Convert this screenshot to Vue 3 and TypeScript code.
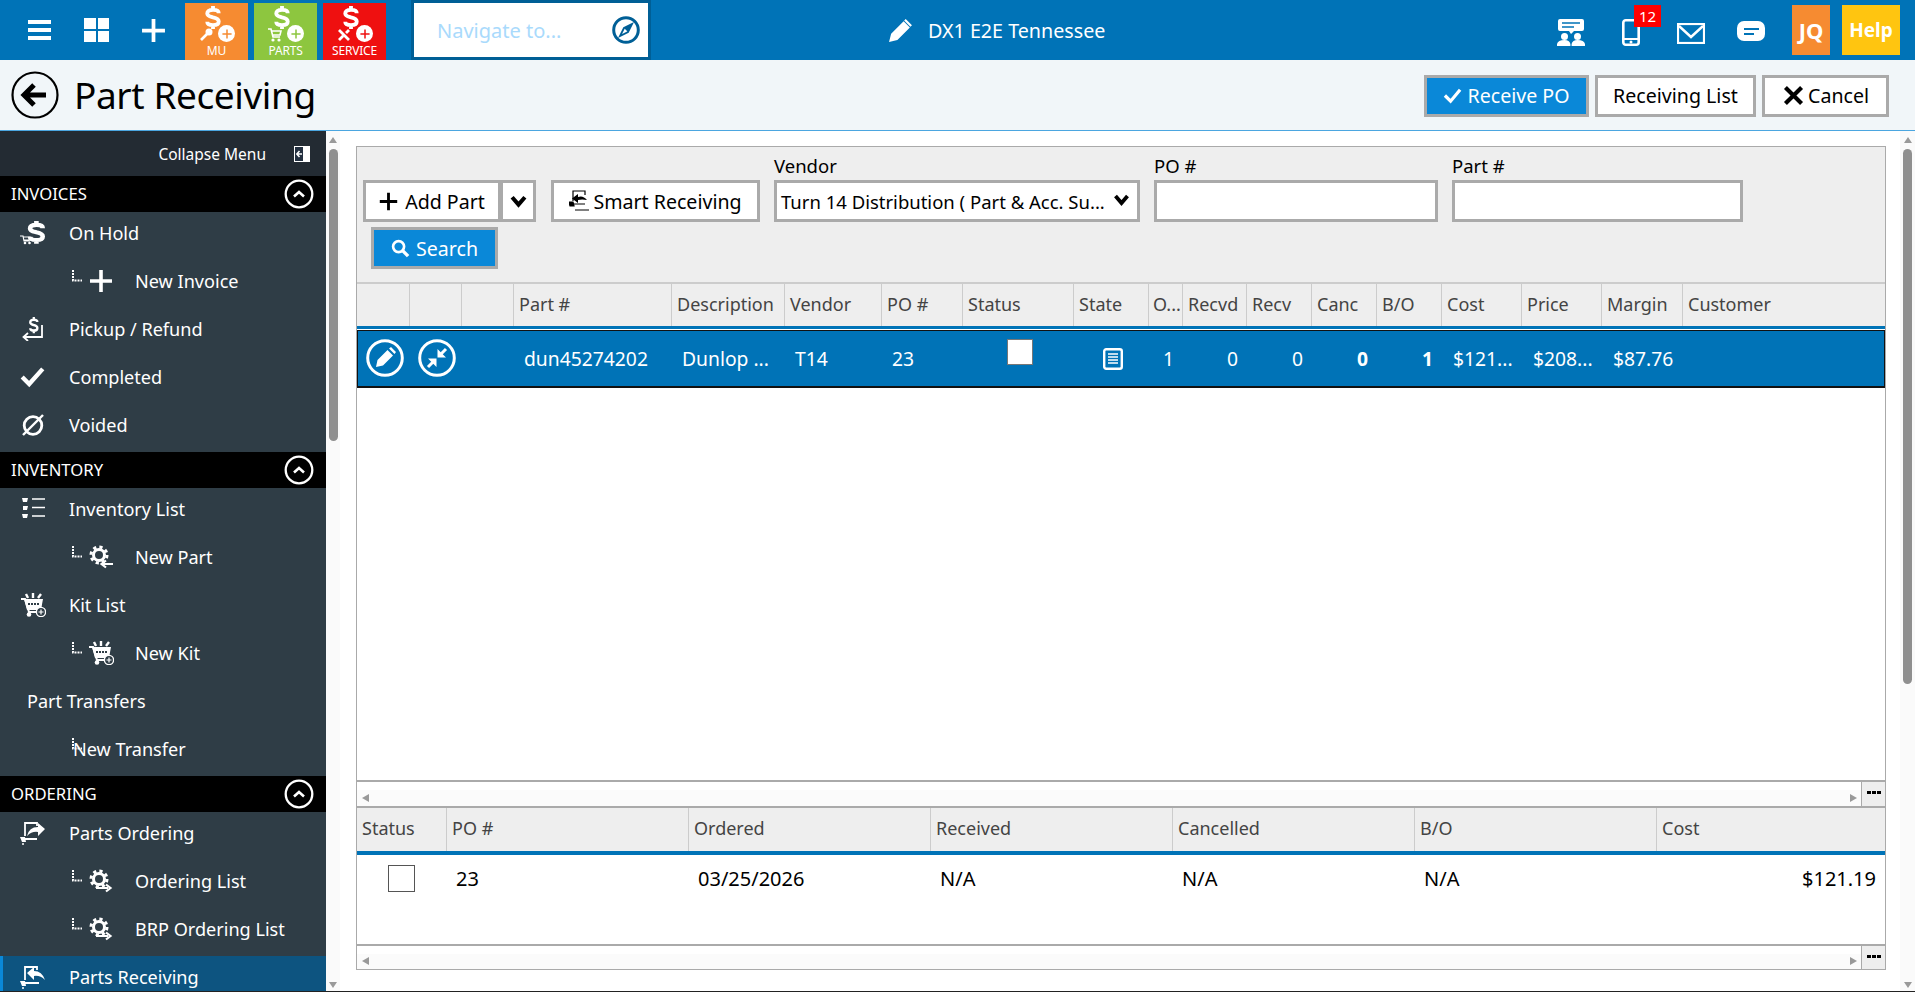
<script setup lang="ts">
interface MenuItem { label: string; icon?: string; level: 0 | 1; active?: boolean; plain?: boolean; overlap?: boolean }
interface Section { title: string; items: MenuItem[] }

const sections: Section[] = [
  { title: 'INVOICES', items: [
    { label: 'On Hold', icon: 'hold', level: 0 },
    { label: 'New Invoice', icon: 'plus', level: 1 },
    { label: 'Pickup / Refund', icon: 'pickup', level: 0 },
    { label: 'Completed', icon: 'check', level: 0 },
    { label: 'Voided', icon: 'void', level: 0 },
  ] },
  { title: 'INVENTORY', items: [
    { label: 'Inventory List', icon: 'list', level: 0 },
    { label: 'New Part', icon: 'gearback', level: 1 },
    { label: 'Kit List', icon: 'kit', level: 0 },
    { label: 'New Kit', icon: 'kit', level: 1 },
    { label: 'Part Transfers', level: 0, plain: true },
    { label: 'New Transfer', level: 1, overlap: true },
  ] },
  { title: 'ORDERING', items: [
    { label: 'Parts Ordering', icon: 'order', level: 0 },
    { label: 'Ordering List', icon: 'gearfwd', level: 1 },
    { label: 'BRP Ordering List', icon: 'gearfwd', level: 1 },
    { label: 'Parts Receiving', icon: 'recv', level: 0, active: true },
  ] },
]

const tiles = [
  { label: 'MU', cls: 'mu', icon: 'key' },
  { label: 'PARTS', cls: 'parts', icon: 'cart' },
  { label: 'SERVICE', cls: 'service', icon: 'wrench' },
]

const topHeads = ['', '', '', 'Part #', 'Description', 'Vendor', 'PO #', 'Status', 'State', 'O...', 'Recvd', 'Recv', 'Canc', 'B/O', 'Cost', 'Price', 'Margin', 'Customer']
const subHeads = ['Status', 'PO #', 'Ordered', 'Received', 'Cancelled', 'B/O', 'Cost']
</script>

<template>
  <div class="app">
    <svg class="defs" aria-hidden="true">
      <symbol id="i-dollar" viewBox="0 0 16 24"><path d="M14 7.500C14 5 11 4 8 4 4.500 4 2 5 2 7.800 2 10.500 5 11 8 11.800 11.500 12.600 14 13.500 14 16.200 14 19 11.500 20 8 20 4.500 20 2 19 2 16.500M8 0V4M8 20V24" fill="none" stroke="currentColor" stroke-width="4"/></symbol>
      <symbol id="i-plus" viewBox="0 0 24 24"><path d="M12 1V23M1 12H23" fill="none" stroke="currentColor" stroke-width="3.600"/></symbol>
      <symbol id="i-key" viewBox="0 0 14 14"><circle cx="10" cy="4" r="3.500" fill="currentColor"/><path d="M8 6 2 12" stroke="currentColor" stroke-width="2.600" fill="none"/></symbol>
      <symbol id="i-cart" viewBox="0 0 14 14"><path d="M0 1H3L5 9H12M3.500 3H13L12 7H4.500" fill="none" stroke="currentColor" stroke-width="1.600"/><circle cx="5" cy="12" r="1.600" fill="currentColor"/><circle cx="11" cy="12" r="1.600" fill="currentColor"/></symbol>
      <symbol id="i-wrench" viewBox="0 0 14 14"><path d="M2 2 12 12M2 12 6 8M9 5 12 2" fill="none" stroke="currentColor" stroke-width="2.800"/></symbol>
      <symbol id="i-compass" viewBox="0 0 28 28"><circle cx="14" cy="14" r="12.300" fill="none" stroke="currentColor" stroke-width="3"/><path d="M20 8 16 16 8 20 12 12Z" fill="none" stroke="currentColor" stroke-width="1.800"/><path d="M20 8 12 12 16 16Z" fill="currentColor"/></symbol>
      <symbol id="i-pencil" viewBox="0 0 24 24"><path d="M1 23 3 15 15 3 21 9 9 21ZM17 1 23 7 21.500 8.500 15.500 2.500Z" fill="currentColor"/></symbol>
      <symbol id="i-people" viewBox="0 0 28 27"><path d="M1 2Q1 0 3 0H25Q27 0 27 2V10Q27 12 25 12H17L14 15 12 12H3Q1 12 1 10Z" fill="currentColor"/><path d="M5 4H23M5 8H17" stroke="#0073b7" stroke-width="1.600"/><circle cx="7.500" cy="17.500" r="3.500" fill="currentColor"/><circle cx="20.500" cy="17.500" r="3.500" fill="currentColor"/><path d="M0 27V25Q1 21 7.500 21 12.500 21 13.400 25V27ZM14.600 27V25Q15.500 21 20.500 21 27 21 28 25V27Z" fill="currentColor"/></symbol>
      <symbol id="i-phone" viewBox="0 0 18 27"><rect x="1.300" y="1.300" width="15.400" height="24.400" rx="2.500" fill="none" stroke="currentColor" stroke-width="2.600"/><path d="M1 20H17" stroke="currentColor" stroke-width="2"/><circle cx="9" cy="23" r="1.500" fill="currentColor"/></symbol>
      <symbol id="i-mail" viewBox="0 0 28 21"><rect x="1" y="1" width="26" height="19" fill="none" stroke="currentColor" stroke-width="2.200"/><path d="M2 3 14 14 26 3" fill="none" stroke="currentColor" stroke-width="2.400"/></symbol>
      <symbol id="i-chat" viewBox="0 0 28 21"><rect x="0" y="0" width="28" height="20" rx="7" fill="currentColor"/><path d="M7 8H22M7 13H17" stroke="#0073b7" stroke-width="2.200"/></symbol>
      <symbol id="i-back" viewBox="0 0 48 48"><circle cx="24" cy="24" r="22.500" fill="none" stroke="currentColor" stroke-width="2.200"/><path d="M35 24H14M23 14 13 24 23 34" fill="none" stroke="currentColor" stroke-width="5"/></symbol>
      <symbol id="i-ok" viewBox="0 0 20 20"><path d="M2 10 8 16 18 4" fill="none" stroke="currentColor" stroke-width="3.400"/></symbol>
      <symbol id="i-x" viewBox="0 0 20 20"><path d="M3 3 17 17M17 3 3 17" fill="none" stroke="currentColor" stroke-width="3.600"/></symbol>
      <symbol id="i-chev" viewBox="0 0 16 12"><path d="M2 2 8 9 14 2" fill="none" stroke="currentColor" stroke-width="3.800"/></symbol>
      <symbol id="i-search" viewBox="0 0 20 20"><circle cx="8" cy="8" r="5.800" fill="none" stroke="currentColor" stroke-width="2.800"/><path d="M12 12 18 18" stroke="currentColor" stroke-width="3.600"/></symbol>
      <symbol id="i-smart" viewBox="0 0 20 24"><path d="M4 12V2H16V6M5 15H16" fill="none" stroke="currentColor" stroke-width="1.200"/><path d="M18 11Q14 6 9 8V5L3 9.500 9 14V11Q13 10 18 11Z" fill="currentColor"/><path d="M0 13H4L5 17H1ZM6 21H20" stroke="currentColor" stroke-width="1.200"/></symbol>
      <symbol id="i-collapse" viewBox="0 0 16 16"><rect x="0.500" y="0.500" width="15" height="15" fill="#233040" stroke="currentColor"/><rect x="9" y="1" width="6" height="14" fill="currentColor"/><path d="M8 8H3M5.500 5 2.800 8 5.500 11" fill="none" stroke="currentColor" stroke-width="1.500"/></symbol>
      <symbol id="i-up" viewBox="0 0 30 30"><circle cx="15" cy="15" r="13.300" fill="none" stroke="currentColor" stroke-width="2.300"/><path d="M10 17.500 15 13 20 17.500" fill="none" stroke="currentColor" stroke-width="2.600"/></symbol>
      <symbol id="i-hold" viewBox="0 0 26 24"><g transform="translate(8 0) scale(1.05 .95)"><path d="M14 7.500C14 5 11 4 8 4 4.500 4 2 5 2 7.800 2 10.500 5 11 8 11.800 11.500 12.600 14 13.500 14 16.200 14 19 11.500 20 8 20 4.500 20 2 19 2 16.500M8 0V4M8 20V24" fill="none" stroke="currentColor" stroke-width="4.400"/></g><path d="M0 15H3L4 20H10M3.500 16H10L9 19H4" fill="none" stroke="currentColor" stroke-width="1.200"/><circle cx="5" cy="22" r="1.300" fill="currentColor"/><circle cx="9.500" cy="22" r="1.300" fill="currentColor"/></symbol>
      <symbol id="i-pickup" viewBox="0 0 24 24"><g transform="translate(8 0) scale(.6 .68)"><path d="M14 7.500C14 5 11 4 8 4 4.500 4 2 5 2 7.800 2 10.500 5 11 8 11.800 11.500 12.600 14 13.500 14 16.200 14 19 11.500 20 8 20 4.500 20 2 19 2 16.500M8 0V4M8 20V24" fill="none" stroke="currentColor" stroke-width="3.800"/></g><path d="M21 8V20H3M7 16 2.500 20 7 24" fill="none" stroke="currentColor" stroke-width="1.800"/></symbol>
      <symbol id="i-check" viewBox="0 0 24 20"><path d="M2 10 8.500 16.500 21 2.500" fill="none" stroke="currentColor" stroke-width="4"/></symbol>
      <symbol id="i-void" viewBox="0 0 24 24"><circle cx="12" cy="12.500" r="8.800" fill="none" stroke="currentColor" stroke-width="2.800"/><path d="M2 22 22 2" stroke="currentColor" stroke-width="2.400"/></symbol>
      <symbol id="i-list" viewBox="0 0 26 24"><path d="M12 2H25M12 10.500H25M12 19H25" stroke="currentColor" stroke-width="1.700"/><path d="M2 1H8L7 5H3ZM3 9H8L7 13H3ZM2 17H8L7 21H3Z" fill="currentColor"/></symbol>
      <symbol id="i-gearback" viewBox="0 0 26 24"><circle cx="11" cy="10" r="5.500" fill="none" stroke="currentColor" stroke-width="3"/><circle cx="11" cy="10" r="8" fill="none" stroke="currentColor" stroke-width="3" stroke-dasharray="3.200 3.100"/><path d="M25 19H14M18 15.500 13.500 19 18 22.500" fill="none" stroke="currentColor" stroke-width="2.200"/></symbol>
      <symbol id="i-gearfwd" viewBox="0 0 26 24"><circle cx="11" cy="10" r="5.500" fill="none" stroke="currentColor" stroke-width="3"/><circle cx="11" cy="10" r="8" fill="none" stroke="currentColor" stroke-width="3" stroke-dasharray="3.200 3.100"/><path d="M8 19H20M18 15.500 22.500 19 18 22.500" fill="none" stroke="currentColor" stroke-width="2.200"/></symbol>
      <symbol id="i-kit" viewBox="0 0 26 24"><path d="M1 6H5L9 19H20" fill="none" stroke="currentColor" stroke-width="2"/><path d="M4 6H23L21 17H7Z" fill="currentColor"/><path d="M8 5 6 1M13 5V0M18 5 21 1" stroke="currentColor" stroke-width="2.400"/><path d="M8 11H19" stroke="#2f3d46" stroke-width="2" stroke-dasharray="2 1"/><circle cx="9" cy="21.500" r="2.300" fill="currentColor"/><circle cx="21" cy="19" r="4.600" fill="#2f3d46" stroke="currentColor" stroke-width="1.400"/><path d="M18.500 19H23.500M21 16.500V21.500" stroke="currentColor" stroke-width="1.200"/></symbol>
      <symbol id="i-order" viewBox="0 0 26 24"><path d="M5 15V2H17V5M5 18H17" fill="none" stroke="currentColor" stroke-width="1.800"/><path d="M25 8 18 2V6Q9 6 7 15 12 10 18 11V15Z" fill="currentColor"/><path d="M0 16H5L6 21H2Z" fill="currentColor"/><circle cx="3" cy="23" r="1" fill="currentColor"/></symbol>
      <symbol id="i-recv" viewBox="0 0 26 24"><path d="M5 15V2H17V5M5 18H19" fill="none" stroke="currentColor" stroke-width="1.800"/><path d="M7 8 14 2V6Q22 6 25 15 20 10 14 11V15Z" fill="currentColor"/><path d="M0 16H5L6 21H2Z" fill="currentColor"/><circle cx="3" cy="23" r="1" fill="currentColor"/></symbol>
      <symbol id="i-expand" viewBox="0 0 38 38"><circle cx="19" cy="19" r="17.300" fill="none" stroke="currentColor" stroke-width="3"/><path d="M28 10 21.500 16.500M10 28 16.500 21.500" fill="none" stroke="currentColor" stroke-width="3"/><path d="M19.500 10 28 18.500H19.500ZM18.500 28 10 19.500H18.500Z" fill="currentColor"/></symbol>
      <symbol id="i-edit" viewBox="0 0 38 38"><circle cx="19" cy="19" r="17.300" fill="none" stroke="currentColor" stroke-width="3"/><path d="M10 28 11.500 21 21.500 11 27 16.500 17 26.500ZM23 9.500 25 8 30 13 28.500 15Z" fill="currentColor"/></symbol>
      <symbol id="i-doc" viewBox="0 0 20 22"><rect x="1.200" y="1.200" width="17.600" height="19.600" rx="2" fill="none" stroke="currentColor" stroke-width="2.400"/><path d="M5 6H15M5 9H15M5 12H15M5 15H15" stroke="currentColor" stroke-width="1.700"/></symbol>
    </svg>

    <header class="topbar">
      <button class="tool hamburger" aria-label="Menu">
        <span></span><span></span><span></span>
      </button>
      <div class="quad"><span></span><span></span><span></span><span></span></div>
      <svg class="topplus"><use href="#i-plus" /></svg>
      <div class="tiles">
        <div v-for="t in tiles" :key="t.label" class="tile" :class="t.cls">
          <svg class="tile-dollar"><use href="#i-dollar" /></svg>
          <svg class="tile-small"><use :href="'#i-' + t.icon" /></svg>
          <span class="tile-circle"><svg><use href="#i-plus" /></svg></span>
          <span class="tile-label">{{ t.label }}</span>
        </div>
      </div>
      <div class="navbox">
        <span class="nav-text">Navigate to...</span>
        <svg class="compass"><use href="#i-compass" /></svg>
      </div>
      <div class="store">
        <svg class="store-pencil"><use href="#i-pencil" /></svg>
        <span>DX1 E2E Tennessee</span>
      </div>
      <div class="top-right">
        <svg class="tr-people"><use href="#i-people" /></svg>
        <div class="tr-phone">
          <svg><use href="#i-phone" /></svg>
          <span class="badge">12</span>
        </div>
        <svg class="tr-mail"><use href="#i-mail" /></svg>
        <svg class="tr-chat"><use href="#i-chat" /></svg>
        <div class="user">JQ</div>
        <div class="help">Help</div>
      </div>
    </header>

    <div class="pagehead">
      <svg class="back"><use href="#i-back" /></svg>
      <h1>Part Receiving</h1>
      <div class="actions">
        <button class="btn primary lg recv"><svg class="bi"><use href="#i-ok" /></svg>Receive PO</button>
        <button class="btn lg list">Receiving List</button>
        <button class="btn lg cancel"><svg class="bi"><use href="#i-x" /></svg>Cancel</button>
      </div>
    </div>

    <div class="body">
      <aside class="sidebar">
        <div class="collapse">
          <span>Collapse Menu</span>
          <svg><use href="#i-collapse" /></svg>
        </div>
        <section v-for="s in sections" :key="s.title">
          <div class="sec-head">
            <span>{{ s.title }}</span>
            <svg><use href="#i-up" /></svg>
          </div>
          <div
            v-for="m in s.items"
            :key="m.label"
            class="item"
            :class="{ sub: m.level === 1, active: m.active, plain: m.plain, overlap: m.overlap }"
          >
            <svg v-if="m.level === 1" class="elbow" viewBox="0 0 10 12"><path d="M1 0V10.500H10" fill="none" stroke="#fff" stroke-width="2" stroke-dasharray="2 1" /></svg>
            <svg v-if="m.icon" class="mi" :class="'mi-' + m.icon"><use :href="'#i-' + m.icon" /></svg>
            <span class="mlabel">{{ m.label }}</span>
          </div>
        </section>
      </aside>
      <div class="vscroll side">
        <i class="arr up"></i><b class="thumb"></b><i class="arr down"></i>
      </div>

      <main class="content">
        <div class="panel">
          <div class="filter">
            <div class="filter-row">
              <div class="split">
                <button class="btn add"><svg class="bi plus"><use href="#i-plus" /></svg>Add Part</button>
                <button class="btn caret" aria-label="More"><svg><use href="#i-chev" /></svg></button>
              </div>
              <button class="btn smart"><svg class="smart-ic"><use href="#i-smart" /></svg>Smart Receiving</button>
              <label class="field vendor">
                <span>Vendor</span>
                <div class="select">Turn 14 Distribution ( Part &amp; Acc. Su...<svg><use href="#i-chev" /></svg></div>
              </label>
              <label class="field po"><span>PO #</span><input type="text" /></label>
              <label class="field part"><span>Part #</span><input type="text" /></label>
            </div>
            <button class="btn primary search"><svg class="bi"><use href="#i-search" /></svg>Search</button>
          </div>

          <div class="grid-head top-cols">
            <div v-for="(h, i) in topHeads" :key="i" class="th">{{ h }}</div>
          </div>
          <div class="grid-body">
            <div class="selrow top-cols">
              <div class="c ic"><svg class="round"><use href="#i-edit" /></svg></div>
              <div class="c ic"><svg class="round"><use href="#i-expand" /></svg></div>
              <div class="c"></div>
              <div class="c partno">dun45274202</div>
              <div class="c desc">Dunlop ...</div>
              <div class="c vend">T14</div>
              <div class="c pono">23</div>
              <div class="c ic"><span class="whitebox"></span></div>
              <div class="c ic"><svg class="doc"><use href="#i-doc" /></svg></div>
              <div class="c num">1</div>
              <div class="c num">0</div>
              <div class="c num">0</div>
              <div class="c num strong">0</div>
              <div class="c num strong">1</div>
              <div class="c money">$121...</div>
              <div class="c money">$208...</div>
              <div class="c money">$87.76</div>
              <div class="c"></div>
            </div>
          </div>
          <div class="hbar">
            <div class="track"><i class="tri left"></i><i class="tri right"></i></div>
            <div class="more"><span></span><span></span><span></span></div>
          </div>

          <div class="grid-head sub-head sub-cols">
            <div v-for="h in subHeads" :key="h" class="th">{{ h }}</div>
          </div>
          <div class="sub-row sub-cols">
            <div class="s ic"><span class="greybox"></span></div>
            <div class="s">23</div>
            <div class="s">03/25/2026</div>
            <div class="s">N/A</div>
            <div class="s">N/A</div>
            <div class="s">N/A</div>
            <div class="s right">$121.19</div>
          </div>
          <div class="hbar last">
            <div class="track"><i class="tri left"></i><i class="tri right"></i></div>
            <div class="more"><span></span><span></span><span></span></div>
          </div>
        </div>
      </main>
      <div class="vscroll page">
        <i class="arr up"></i><b class="thumb"></b><i class="arr down"></i>
      </div>
    </div>
    <div class="foot"></div>
  </div>
</template>

<style>
html, body { margin: 0; padding: 0; overflow: hidden; background: #fff; }
</style>

<style scoped>
.app {
  width: 1915px;
  height: 992px;
  display: flex;
  flex-direction: column;
  overflow: hidden;
  font-family: "Noto Sans", "Open Sans", sans-serif;
  color: #000;
  position: relative;
}
.defs { position: absolute; width: 0; height: 0; overflow: hidden; }
button { font-family: inherit; cursor: pointer; }

/* top bar */
.topbar {
  height: 60px;
  flex: none;
  background: #0073b7;
  color: #fff;
  display: flex;
  align-items: center;
  padding-left: 28px;
}
.hamburger {
  width: 23px;
  height: 20px;
  padding: 0;
  border: 0;
  background: none;
  display: flex;
  flex-direction: column;
  justify-content: space-between;
}
.hamburger span { display: block; height: 4px; background: #fff; }
.quad {
  width: 25px;
  height: 24px;
  margin-left: 33px;
  display: grid;
  grid-template-columns: 1fr 1fr;
  grid-template-rows: 1fr 1fr;
  gap: 2px;
}
.quad span { background: #fff; }
.topplus { width: 25px; height: 25px; margin-left: 32px; color: #fff; }
.tiles { display: flex; gap: 6px; margin-left: 19px; align-self: stretch; padding-top: 3px; }
.tile { width: 63px; position: relative; color: #fff; }
.tile.mu { background: #f68b31; --tile: #f68b31; }
.tile.parts { background: #8dc63f; --tile: #8dc63f; }
.tile.service { background: #ef1010; --tile: #ef1010; }
.tile-dollar { position: absolute; left: 20px; top: 3px; width: 16px; height: 23px; }
.tile-small { position: absolute; left: 14px; top: 25px; width: 14px; height: 14px; }
.tile-circle {
  position: absolute;
  left: 33px;
  top: 22px;
  width: 17px;
  height: 17px;
  border-radius: 50%;
  background: #fff;
  color: var(--tile);
  display: flex;
  align-items: center;
  justify-content: center;
}
.tile-circle svg { width: 10px; height: 10px; }
.tile-label {
  position: absolute;
  left: 0;
  right: 0;
  bottom: 1px;
  text-align: center;
  font-size: 12px;
  line-height: 16px;
  letter-spacing: -0.2px;
}
.navbox {
  margin-left: 25px;
  width: 240px;
  height: 60px;
  box-sizing: border-box;
  border: 3px solid #005f96;
  background: #fff;
  display: flex;
  align-items: center;
  justify-content: space-between;
  padding: 0 8px 0 23px;
}
.nav-text { color: #a9dafc; font-size: 20px; }
.compass { width: 28px; height: 28px; color: #005f96; }
.store { margin-left: 237px; display: flex; align-items: center; gap: 15px; font-size: 19.700px; }
.store-pencil { width: 25px; height: 25px; color: #fff; }
.top-right { margin-left: auto; display: flex; align-items: center; height: 60px; padding-right: 15px; color: #fff; }
.tr-people { width: 28px; height: 27px; margin-top: 5px; }
.tr-phone { position: relative; width: 18px; height: 27px; margin-left: 37px; margin-top: 5px; }
.tr-phone svg { width: 18px; height: 27px; display: block; }
.badge {
  position: absolute;
  left: 12px;
  top: -14px;
  width: 27px;
  height: 22px;
  background: #f00;
  color: #fff;
  font-size: 15px;
  line-height: 22px;
  text-align: center;
}
.tr-mail { width: 28px; height: 21px; margin-left: 37px; margin-top: 7px; }
.tr-chat { width: 28px; height: 21px; margin-left: 32px; margin-top: 3px; }
.user, .help {
  height: 50px;
  display: flex;
  align-items: center;
  justify-content: center;
  font-weight: 700;
  font-size: 19px;
  color: #fff;
}
.user { width: 38px; margin-left: 27px; background: #f68b31; font-size: 22px; }
.help { width: 58px; margin-left: 12px; background: #ffc510; }

/* page head */
.pagehead {
  height: 70px;
  flex: none;
  box-sizing: content-box;
  background: #f1f6f9;
  border-bottom: 1px solid #4ba6e0;
  display: flex;
  align-items: center;
  padding-left: 11px;
  padding-right: 26px;
}
.back { width: 48px; height: 48px; color: #000; }
h1 { margin: 0 0 0 15px; font-size: 37px; font-weight: 400; line-height: 48px; letter-spacing: -0.4px; }
.actions { margin-left: auto; display: flex; gap: 6px; margin-top: 1px; }

.btn {
  box-sizing: border-box;
  height: 42px;
  background: #fff;
  border: 3px solid #aaa;
  border-radius: 0;
  color: #000;
  font-size: 19.600px;
  display: inline-flex;
  align-items: center;
  justify-content: center;
  padding: 0;
  white-space: nowrap;
}
.btn.primary { background: #0a88d8; color: #fff; }
.bi { width: 19px; height: 19px; margin-right: 4px; flex: none; }
.recv { width: 165px; }
.recv .bi { margin-right: 5px; }
.list { width: 161px; }
.cancel { width: 127px; }
.cancel .bi { width: 23px; height: 23px; margin-right: 3px; }

/* body */
.body { flex: 1; min-height: 0; display: flex; }
.sidebar { width: 326px; flex: none; background: #2f3d46; color: #fff; overflow: hidden; }
.collapse {
  height: 45px;
  background: #232b33;
  display: flex;
  align-items: center;
  justify-content: flex-end;
  padding-right: 16px;
  font-size: 15.500px;
  gap: 28px;
}
.collapse svg { width: 16px; height: 16px; color: #fff; }
.sec-head {
  height: 36px;
  background: #000;
  display: flex;
  align-items: center;
  justify-content: space-between;
  padding: 0 12px 0 11px;
  font-size: 16.700px;
}
.sec-head span { padding-bottom: 2px; }
.sec-head svg { width: 30px; height: 30px; color: #fff; }
.item {
  height: 48px;
  box-sizing: border-box;
  padding: 0 0 6px 20px;
  display: flex;
  align-items: center;
  font-size: 18.100px;
  white-space: nowrap;
}
.item .mi { width: 26px; height: 24px; flex: none; margin-right: 23px; color: #fff; }
.item.sub { padding-left: 72px; }
.elbow { width: 10px; height: 12px; flex: none; margin: -10px 6px 0 0; }
.item.sub .mi { margin-right: 21px; }
.item.plain { padding-left: 27px; }
.item.overlap .elbow { margin-right: -9px; }
.item.active {
  background: #0d5480;
  border-left: 3px solid #0a88d8;
  padding-left: 17px;
}

/* scrollbars */
.vscroll { flex: none; background: #fafafa; display: flex; flex-direction: column; align-items: center; position: relative; }
.vscroll.side { width: 14px; }
.vscroll.page { width: 15px; }
.arr { position: absolute; width: 0; height: 0; border-left: 4.500px solid transparent; border-right: 4.500px solid transparent; }
.arr.up { top: 6px; border-bottom: 6px solid #999; }
.arr.down { bottom: 3px; border-top: 6px solid #999; }
.thumb { position: absolute; top: 18px; width: 9px; background: #8f8f8f; border-radius: 5px; }
.side .thumb { height: 292px; }
.page .thumb { height: 535px; }

/* main */
.content { flex: 1; min-width: 0; padding: 15px 14px 0 16px; background: #fff; }
.panel {
  height: 824px;
  box-sizing: border-box;
  border: 1px solid #aaa;
  display: flex;
  flex-direction: column;
  position: relative;
  background: #fff;
}
.filter { height: 135px; flex: none; background: #eee; padding: 8px 0 0 6px; box-sizing: border-box; }
.filter-row { display: flex; align-items: flex-end; height: 67px; }
.split { display: flex; }
.add { width: 138px; }
.add .plus { width: 19px; height: 19px; margin-right: 7px; }
.caret { width: 35px; border-left-width: 2px; }
.caret svg { width: 17px; height: 13px; }
.smart { width: 209px; margin-left: 15px; }
.smart-ic { width: 20px; height: 24px; margin-right: 4px; }
.field { display: flex; flex-direction: column; font-size: 18.500px; }
.field span { line-height: 25px; margin-bottom: 2px; margin-top: -2px; }
.vendor { width: 366px; margin-left: 14px; }
.po { width: 284px; margin-left: 14px; }
.part { width: 291px; margin-left: 14px; }
.field input, .select {
  box-sizing: border-box;
  height: 42px;
  width: 100%;
  border: 3px solid #aaa;
  background: #fff;
  border-radius: 0;
  outline: none;
}
.select {
  display: flex;
  align-items: center;
  justify-content: space-between;
  padding: 0 7px 0 4px;
  font-size: 18.500px;
  white-space: nowrap;
}
.select svg { width: 17px; height: 12px; margin-bottom: 3px; flex: none; }
.search { width: 127px; margin: 5px 0 0 8px; }
.search .bi { margin-right: 6px; }

.grid-head { flex: none; background: #eee; box-sizing: border-box; color: #444; }
.grid-head.top-cols { height: 47px; border-top: 2px solid #ccc; border-bottom: 3px solid #0073b7; }
.top-cols {
  display: grid;
  grid-template-columns: 53px 52px 52px 158px 113px 97px 81px 111px 75px 34px 64px 65px 65px 65px 80px 80px 81px 1fr;
}
.sub-cols {
  display: grid;
  grid-template-columns: 90px 242px 242px 242px 242px 242px 1fr;
}
.th {
  padding-left: 5px;
  font-size: 18px;
  line-height: 40px;
  border-right: 1px solid #ccc;
  white-space: nowrap;
  overflow: hidden;
}
.th:last-child { border-right: 0; }
.top-cols .th:nth-child(10) { padding-left: 4px; }
.grid-body { flex: 1; min-height: 0; padding-top: 1px; }
.selrow {
  height: 58px;
  background: #0073b7;
  border: 1px solid #111;
  border-bottom-width: 2px;
  box-sizing: border-box;
  color: #fff;
  font-size: 19.300px;
  margin-left: 0;
}
.c { display: flex; align-items: center; white-space: nowrap; }
.c.ic { justify-content: center; align-items: flex-start; padding-top: 8px; padding-bottom: 0; }
.round { width: 38px; height: 38px; color: #fff; }
.whitebox { width: 26px; height: 26px; background: #fff; border: 1px solid #777; box-sizing: border-box; }
.doc { width: 20px; height: 22px; color: #fff; margin-top: 9px; }
.partno { padding-left: 9px; }
.desc { padding-left: 9px; }
.vend { padding-left: 9px; }
.pono { padding-left: 9px; }
.num { justify-content: flex-end; padding-right: 10px; }
.strong { font-weight: 700; }
.money { padding-left: 10px; }

.hbar {
  flex: none;
  height: 28px;
  box-sizing: border-box;
  border-top: 2px solid #aaa;
  border-bottom: 2px solid #aaa;
  display: flex;
  background: #fff;
}
.hbar.last { height: 25px; border-bottom: 0; }
.track { flex: 1; position: relative; background: linear-gradient(#fff 8px, #fbfbfb 8px); }
.tri { position: absolute; bottom: 4px; width: 0; height: 0; border-top: 4.500px solid transparent; border-bottom: 4.500px solid transparent; }
.tri.left { left: 5px; border-right: 7px solid #999; }
.tri.right { right: 4px; border-left: 7px solid #999; }
.more {
  width: 25px;
  margin-right: -1px;
  background: #eee;
  border: 1px solid #aaa;
  border-width: 0 1px 0 1px;
  box-sizing: border-box;
  display: flex;
  align-items: center;
  justify-content: center;
  gap: 1px;
  position: relative;
  z-index: 1;
  padding-bottom: 3px;
}
.more span { width: 4px; height: 3px; background: #000; }

.sub-head { height: 47px; border-bottom: 4px solid #0073b7; }
.sub-row { flex: none; height: 89px; font-size: 20px; }
.s { padding-left: 9px; line-height: 48px; }
.s.ic { padding: 10px 0 0 31px; line-height: 0; }
.s.right { text-align: right; padding: 0 9px 0 0; }
.greybox { display: inline-block; width: 27px; height: 27px; border: 1px solid #555; box-sizing: border-box; background: #fff; }

.foot { height: 1.500px; background: #222; flex: none; }
</style>
